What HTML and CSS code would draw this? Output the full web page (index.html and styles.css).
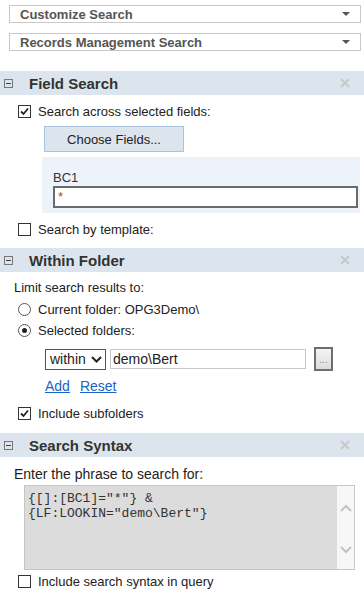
FILE: index.html
```html
<!DOCTYPE html>
<html lang="en">
<head>
  <meta charset="UTF-8">
  <title>Search</title>
  <link rel="stylesheet" href="styles.css">
</head>
<body>

<div class="top-selects">
  <div class="drop">
    <span>Customize Search</span>
    <span class="caret"></span>
  </div>
  <div class="drop">
    <span>Records Management Search</span>
    <span class="caret"></span>
  </div>
</div>

<!-- Field Search -->
<div class="panel-head">
  <span class="toggle-box"></span>
  <span class="panel-title">Field Search</span>
  <svg class="close" width="10" height="10" viewBox="0 0 10 10"><path d="M1 1L9 9M9 1L1 9" stroke="#c8c8c8" stroke-width="2"/></svg>
</div>
<div class="panel-body field-body">
  <div class="row">
    <span class="check on"><svg width="11" height="11" viewBox="0 0 11 11"><path d="M2 5.5L4.5 8L9 2.5" fill="none" stroke="#222" stroke-width="1.8"/></svg></span>
    <span>Search across selected fields:</span>
  </div>
  <button class="choose" type="button">Choose Fields...</button>
  <div class="fields-box">
    <div class="field-label">BC1</div>
    <div class="field-input">*</div>
  </div>
  <div class="row">
    <span class="check"></span>
    <span>Search by template:</span>
  </div>
</div>

<!-- Within Folder -->
<div class="panel-head">
  <span class="toggle-box"></span>
  <span class="panel-title">Within Folder</span>
  <svg class="close" width="10" height="10" viewBox="0 0 10 10"><path d="M1 1L9 9M9 1L1 9" stroke="#c8c8c8" stroke-width="2"/></svg>
</div>
<div class="panel-body folder-body">
  <div class="note">Limit search results to:</div>
  <div class="row">
    <span class="radio"></span>
    <span>Current folder: OPG3Demo\</span>
  </div>
  <div class="row">
    <span class="radio on"></span>
    <span>Selected folders:</span>
  </div>
  <div class="folder-pick">
    <div class="within">
      <span>within</span>
      <svg width="11" height="7" viewBox="0 0 11 7"><path d="M1 1L5.5 5.5L10 1" fill="none" stroke="#222" stroke-width="2"/></svg>
    </div>
    <div class="path-input">demo\Bert</div>
    <div class="browse">...</div>
  </div>
  <div class="links">
    <a href="#">Add</a>
    <a href="#">Reset</a>
  </div>
  <div class="row">
    <span class="check on"><svg width="11" height="11" viewBox="0 0 11 11"><path d="M2 5.5L4.5 8L9 2.5" fill="none" stroke="#222" stroke-width="1.8"/></svg></span>
    <span>Include subfolders</span>
  </div>
</div>

<!-- Search Syntax -->
<div class="panel-head">
  <span class="toggle-box"></span>
  <span class="panel-title">Search Syntax</span>
  <svg class="close" width="10" height="10" viewBox="0 0 10 10"><path d="M1 1L9 9M9 1L1 9" stroke="#c8c8c8" stroke-width="2"/></svg>
</div>
<div class="panel-body syntax-body">
  <div class="note">Enter the phrase to search for:</div>
  <div class="syntax">
    <div class="syntax-text">{[]:[BC1]="*"} &amp;<br>{LF:LOOKIN="demo\Bert"}</div>
    <div class="scroll">
      <svg width="12" height="8" viewBox="0 0 12 8"><path d="M1 7L6 2L11 7" fill="none" stroke="#c4c4c4" stroke-width="2"/></svg>
      <svg width="12" height="8" viewBox="0 0 12 8"><path d="M1 1L6 6L11 1" fill="none" stroke="#c4c4c4" stroke-width="2"/></svg>
    </div>
  </div>
  <div class="row">
    <span class="check"></span>
    <span>Include search syntax in query</span>
  </div>
</div>

</body>
</html>
```

FILE: styles.css
```css
body {
  margin: 0;
  font-family: "Liberation Sans", Arial, sans-serif;
  font-size: 13px;
  color: #222;
  background: #fff;
}

.top-selects {
  padding: 5px 3px 0 9px;
  display: flex;
  flex-direction: column;
  gap: 10px;
  height: 66px;
}

.drop {
  height: 16px;
  border: 1px solid #c9c9c9;
  display: flex;
  align-items: center;
  justify-content: space-between;
  padding: 0 10px 0 10px;
  font-weight: bold;
  color: #555;
}

.caret {
  width: 0;
  height: 0;
  border-left: 4px solid transparent;
  border-right: 4px solid transparent;
  border-top: 4px solid #555;
}

.panel-head {
  height: 24px;
  background: #dce5ed;
  display: flex;
  align-items: center;
  padding: 0 14px 0 4px;
}

.toggle-box {
  width: 7px;
  height: 7px;
  border: 1px solid #777;
  position: relative;
  margin-right: 16px;
}

.toggle-box::after {
  content: "";
  position: absolute;
  left: 1px;
  top: 3px;
  width: 5px;
  height: 1px;
  background: #444;
}

.panel-title {
  font-weight: bold;
  font-size: 15px;
  color: #333;
  flex: 1;
}

.panel-body {
  padding: 6px 0 10px 0;
}

.field-body {
  padding-bottom: 8px;
}

.row {
  height: 21px;
  display: flex;
  align-items: center;
  gap: 7px;
  padding-left: 18px;
}

.check,
.radio {
  width: 11px;
  height: 11px;
  border: 1px solid #333;
  background: #fff;
  display: flex;
  align-items: center;
  justify-content: center;
  flex: none;
}

.radio {
  border-color: #555;
  border-radius: 50%;
}

.radio.on::after {
  content: "";
  width: 5px;
  height: 5px;
  border-radius: 50%;
  background: #222;
}

.choose {
  display: block;
  margin: 4px 0 5px 44px;
  width: 140px;
  height: 26px;
  background: #dce5ee;
  border: 1px solid #a8c4de;
  font-family: "Liberation Sans", Arial, sans-serif;
  font-size: 13px;
  color: #222;
  padding: 0;
}

.fields-box {
  margin: 0 4px 6px 42px;
  background: #edf3fb;
  padding: 13px 2px 5px 11px;
}

.field-label {
  line-height: 15px;
  color: #333;
  margin-bottom: 1px;
}

.field-input {
  height: 18px;
  border: 2px solid #6b6b6b;
  background: #fff;
  line-height: 18px;
  padding-left: 3px;
  font-size: 13px;
  color: #8a5a1a;
}

.folder-body {
  padding-top: 7px;
  padding-bottom: 9px;
}

.folder-body .note,
.syntax-body .note {
  padding-left: 14px;
  height: 18px;
  line-height: 18px;
}

.folder-body .note {
  margin-bottom: 2px;
}

.folder-pick {
  display: flex;
  align-items: center;
  margin: 6px 0 4px 45px;
  height: 24px;
}

.within {
  height: 21px;
  border: 1px solid #555;
  display: flex;
  align-items: center;
  justify-content: space-between;
  padding: 0 3px 0 4px;
  box-sizing: border-box;
  width: 61px;
  font-size: 14px;
}

.path-input {
  margin-left: 4px;
  width: 196px;
  height: 20px;
  box-sizing: border-box;
  border: 1px solid #c8c8c8;
  padding-left: 2px;
  line-height: 18px;
  font-size: 14px;
}

.browse {
  margin-left: 8px;
  width: 19px;
  height: 24px;
  box-sizing: border-box;
  border: 2px solid #6e6e6e;
  background: linear-gradient(#f4f4f4, #dcdcdc);
  color: #8a8a6a;
  font-size: 10px;
  text-align: center;
  line-height: 22px;
}

.links {
  padding-left: 45px;
  height: 22px;
  display: flex;
  align-items: center;
  gap: 10px;
  font-size: 14px;
}

.links a {
  color: #1e63c5;
}

.folder-body .row:last-child {
  margin-top: 6px;
}

.syntax-body {
  padding-top: 8px;
}

.syntax-body .note {
  font-size: 14px;
  margin-bottom: 2px;
}

.syntax {
  margin: 0 9px 1px 24px;
  height: 83px;
  border: 1px solid #c6c6c6;
  background: #dcdcdc;
  display: flex;
}

.syntax-text {
  flex: 1;
  font-family: "Liberation Mono", "Courier New", monospace;
  font-size: 13px;
  line-height: 15px;
  padding: 5px 3px;
  color: #333;
}

.scroll {
  width: 17px;
  background: #f7f7f7;
  display: flex;
  flex-direction: column;
  justify-content: space-between;
  align-items: center;
  padding: 18px 0 15px;
}
```
